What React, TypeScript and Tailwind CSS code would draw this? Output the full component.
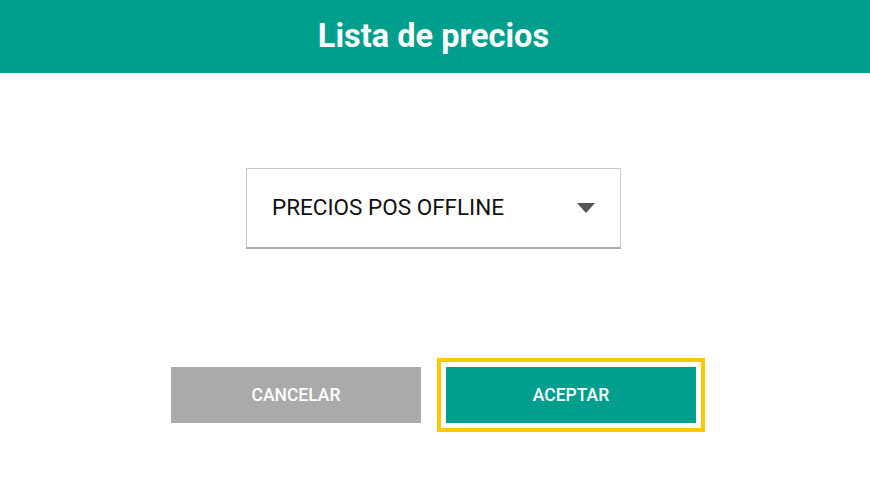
import { useState } from "react";

const App = () => {
  const [lista] = useState("PRECIOS POS OFFLINE");

  return (
    <div className="min-h-screen bg-white font-['Roboto',sans-serif]">
      {/* Cabecera */}
      <div className="h-[73px] bg-[#009e8c] flex items-center justify-center pr-[3px]">
        <h1 className="text-[32.5px] font-bold text-white">Lista de precios</h1>
      </div>

      {/* Selector */}
      <div className="flex justify-center mt-[95px] pr-[3px]">
        <div className="w-[375px] h-[81px] border border-[#c9c9c9] border-b-2 border-b-[#a9a9a9] flex items-center justify-between pl-[25px] pr-[25px]">
          <span className="text-[22.5px] text-[#111]">{lista}</span>
          <svg width="18" height="10" viewBox="0 0 18 10">
            <polygon points="0,0 18,0 9,10" fill="#555555" />
          </svg>
        </div>
      </div>

      {/* Botones */}
      <div className="flex justify-center gap-[25px] mt-[118px] pr-[3px]">
        <button className="w-[250px] h-[56px] bg-[#aaaaaa] text-white text-[17.5px] font-medium">
          CANCELAR
        </button>
        <button className="w-[250px] h-[56px] bg-[#009e8c] text-white text-[17.5px] font-medium outline-4 outline-[#fdc800] outline-offset-[5px]">
          ACEPTAR
        </button>
      </div>
    </div>
  );
};

export default App;
